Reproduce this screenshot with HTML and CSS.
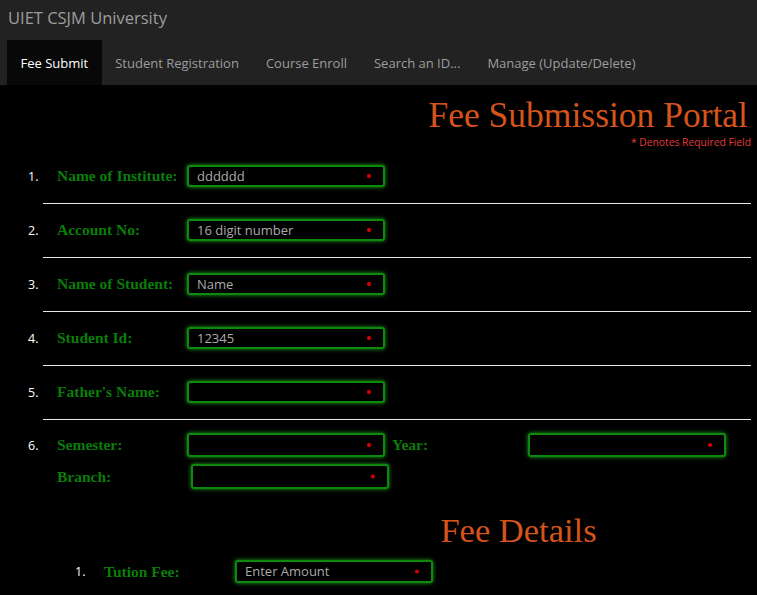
FILE: index.html
```html
<!DOCTYPE html>
<html>
<head>
<meta charset="utf-8">
<link rel="stylesheet" href="styles.css">
</head>
<body>
<header class="navbar">
  <div class="brand">UIET CSJM University</div>
  <nav class="tabs">
    <a class="tab active">Fee Submit</a>
    <a class="tab">Student Registration</a>
    <a class="tab">Course Enroll</a>
    <a class="tab">Search an ID...</a>
    <a class="tab">Manage (Update/Delete)</a>
  </nav>
</header>
<main class="page">
  <h1 class="title">Fee Submission Portal</h1>
  <p class="req">* Denotes Required Field</p>
  <div class="rows">
    <div class="row"><span class="num">1.</span><span class="label">Name of Institute:</span><input class="field filled" value="dddddd"></div>
    <div class="row"><span class="num">2.</span><span class="label">Account No:</span><input class="field" placeholder="16 digit number"></div>
    <div class="row"><span class="num">3.</span><span class="label">Name of Student:</span><input class="field" placeholder="Name"></div>
    <div class="row"><span class="num">4.</span><span class="label">Student Id:</span><input class="field" placeholder="12345"></div>
    <div class="row"><span class="num">5.</span><span class="label">Father's Name:</span><input class="field"></div>
    <div class="row multi">
      <div class="line"><span class="num">6.</span><span class="label">Semester:</span><input class="field"><span class="label year">Year:</span><input class="field"></div>
      <div class="line"><span class="num"></span><span class="label branch">Branch:</span><input class="field"></div>
    </div>
  </div>
  <h2 class="sub">Fee Details</h2>
  <div class="fee-row"><span class="num">1.</span><span class="label">Tution Fee:</span><input class="field" placeholder="Enter Amount"></div>
</main>
</body>
</html>
```
FILE: styles.css
```css
html, body { margin: 0; padding: 0; background: #000; height: 100%; overflow: hidden; }
body { font-family: "Open Sans", "DejaVu Sans", sans-serif; }
.navbar { background: #222; height: 85px; }
.brand { height: 40px; line-height: 35px; padding-left: 8px; color: #9d9d9d; font-size: 16.5px; }
.tabs { display: flex; padding-left: 7px; height: 45px; }
.tab { display: flex; align-items: center; padding: 0 13.5px; color: #9d9d9d; font-size: 13px; }
.tab.active { background: #080808; color: #fff; }
.page { padding: 0 6px 0 0; }
.title { margin: 10px 0 0; text-align: right; font-family: "Liberation Serif", "Times New Roman", serif; font-weight: normal; font-size: 35.5px; line-height: 40px; color: #d4541c; padding-right: 3px; }
.req { margin: 0; text-align: right; color: #e23a3a; font-size: 10.3px; line-height: 14px; }
.rows { margin-left: 43px; margin-top: 1px; }
.row { display: flex; align-items: center; padding: 15px 0 16px; border-bottom: 1px solid #e8e8e8; }
.row:last-child { border-bottom: none; }
.row.multi { display: block; padding-top: 13px; }
.line { display: flex; align-items: center; }
.line + .line { margin-top: 7px; }
.num { margin-left: -15px; width: 29px; color: #fff; font-size: 12.5px; font-family: "Open Sans", sans-serif; }
.label { width: 130px; color: #0a7d0a; font-family: "Liberation Serif", "Times New Roman", serif; font-weight: bold; font-size: 15.5px; }
.label.year { width: 136px; margin-left: 7px; }
.label.branch { width: 134px; }
.field { box-sizing: border-box; width: 198px; height: 22px; background: #000 radial-gradient(circle at calc(100% - 14px) 50%, #d00000 0, #d00000 1.6px, transparent 2.4px); border: 2px solid #0d8a0d; border-radius: 3px; box-shadow: 0 0 4px #1fa01f; color: #aaa; font-family: "Open Sans", sans-serif; font-size: 13px; line-height: 17px; padding: 0 8px 1px; outline: none; }
.field::placeholder { color: #aaa; opacity: 1; }
.row.multi .line:first-child .field { height: 24px; }
.line:last-child .field { height: 25px; }
.sub { margin: 7px 0 0 286px; text-align: center; font-family: "Liberation Serif", "Times New Roman", serif; font-weight: normal; font-size: 34.5px; line-height: 36px; color: #d4541c; }
.fee-row { display: flex; align-items: center; margin-left: 90px; margin-top: 12px; }
.fee-row .label { width: 131px; }
.fee-row .field { height: 23px; }
```
